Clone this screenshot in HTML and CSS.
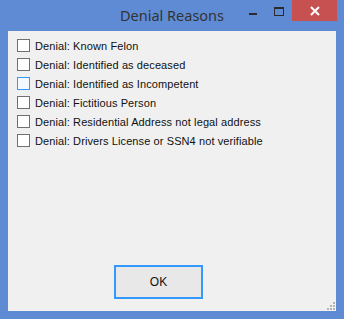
FILE: index.html
```html
<!DOCTYPE html>
<html lang="en">
<head>
<meta charset="UTF-8">
<title>Denial Reasons</title>
<link rel="stylesheet" href="styles.css">
</head>
<body>

<div class="window">
  <div class="titlebar">
    <div class="title">Denial Reasons</div>
    <div class="controls">
      <div class="btn-min"><span></span></div>
      <div class="btn-max"><span></span></div>
      <div class="btn-close">
        <svg width="10" height="10" viewBox="0 0 10 10"><path d="M1 1 L9 9 M9 1 L1 9" stroke="#fff" stroke-width="2"/></svg>
      </div>
    </div>
  </div>
  <div class="client">
    <ul class="reasons">
      <li><span class="box"></span>Denial: Known Felon</li>
      <li><span class="box"></span>Denial: Identified as deceased</li>
      <li><span class="box hover"></span>Denial: Identified as Incompetent</li>
      <li><span class="box"></span>Denial: Fictitious Person</li>
      <li><span class="box"></span>Denial: Residential Address not legal address</li>
      <li><span class="box"></span>Denial: Drivers License or SSN4 not verifiable</li>
    </ul>
    <div class="actions">
      <button class="ok">OK</button>
    </div>
    <div class="grip">
      <svg width="8" height="8" viewBox="0 0 8 8" fill="#b4b4b4">
        <rect x="6" y="0" width="2" height="2"/>
        <rect x="3" y="3" width="2" height="2"/><rect x="6" y="3" width="2" height="2"/>
        <rect x="0" y="6" width="2" height="2"/><rect x="3" y="6" width="2" height="2"/><rect x="6" y="6" width="2" height="2"/>
      </svg>
    </div>
  </div>
</div>

</body>
</html>
```

FILE: styles.css
```css
body {
  margin: 0;
  background: #5f8bd5;
}
.window {
  width: 344px;
  height: 319px;
  background: #5f8bd5;
  display: flex;
  flex-direction: column;
}
.titlebar {
  height: 31px;
  position: relative;
}
.title {
  text-align: center;
  font-family: "Noto Sans", sans-serif;
  font-size: 14.5px;
  color: #333;
  line-height: 20px;
  padding-top: 5px;
}
.controls {
  position: absolute;
  top: 0;
  right: 7px;
  display: flex;
}
.btn-min, .btn-max {
  width: 26px;
  height: 21px;
  display: flex;
  justify-content: center;
}
.btn-min span {
  width: 8px;
  height: 2px;
  margin-top: 13px;
  background: #2b2b2b;
}
.btn-max span {
  width: 8px;
  height: 6px;
  margin-top: 7px;
  border: 1px solid #2b2b2b;
  border-top-width: 2px;
}
.btn-close {
  width: 45px;
  height: 21px;
  background: #c75050;
  display: flex;
  align-items: center;
  justify-content: center;
}
.client {
  position: relative;
  margin: 0 8px;
  height: 280px;
  background: #f0f0f0;
}
.reasons {
  list-style: none;
  margin: 0;
  padding: 5px 0 0 9px;
  font-family: "Liberation Sans", Arial, sans-serif;
  font-size: 11px;
  letter-spacing: 0.1px;
  color: #111;
}
.reasons li {
  display: flex;
  align-items: center;
  height: 19px;
}
.box {
  width: 11px;
  height: 11px;
  border: 1px solid #707070;
  background: #fff;
  margin-right: 5px;
}
.box.hover {
  border-color: #3399ff;
  background: #f3f9ff;
}
.actions {
  position: absolute;
  left: 106px;
  top: 234px;
}
.ok {
  width: 89px;
  height: 34px;
  border: 2px solid #3399ff;
  background: #e8e8e8;
  font-family: "Liberation Sans", Arial, sans-serif;
  font-size: 12px;
  color: #111;
  padding: 0;
}
.grip {
  position: absolute;
  right: 1px;
  bottom: 1px;
  line-height: 0;
}
```
